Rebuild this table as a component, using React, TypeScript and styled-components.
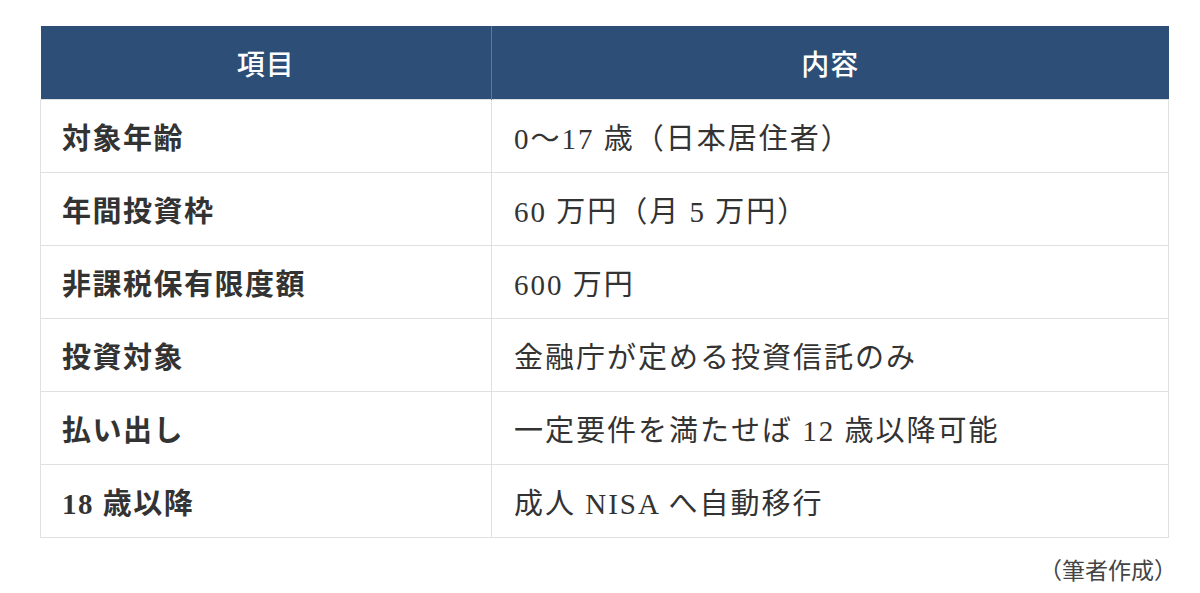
import React from "react";
import styled, { createGlobalStyle } from "styled-components";

const GlobalStyle = createGlobalStyle`
    body {
        margin: 0;
        background: #ffffff;
        font-family: "Liberation Serif", "Noto Sans CJK JP", serif;
    }
`;

const Page = styled.div`
    padding: 26px 31px 0 40px;
`;

const Table = styled.table`
    width: 1129px;
    border-collapse: collapse;
    table-layout: fixed;
`;

const HeadCell = styled.th`
    background-color: #2c4e77;
    color: #ffffff;
    height: 73px;
    padding: 0;
    font-size: 28px;
    font-weight: 500;
    letter-spacing: 1px;
    text-align: center;
    border-left: 1px solid #5a78a0;
    &:first-child {
        border-left: none;
    }
`;

const Row = styled.tr`
    height: 73px;
`;

const Cell = styled.td<{ $bold?: boolean }>`
    border: 1px solid #e0e0e0;
    padding: 0 0 0 ${(p) => (p.$bold ? "21px" : "22px")};
    font-size: 29px;
    font-weight: ${(p) => (p.$bold ? 700 : 400)};
    color: #333333;
    letter-spacing: ${(p) => (p.$bold ? "1.5px" : "2px")};
    white-space: nowrap;
`;

const Caption = styled.div`
    width: 1137px;
    text-align: right;
    margin-top: 14px;
    font-size: 23px;
    color: #444444;
`;

const rows: [string, string][] = [
    ["対象年齢", "0〜17 歳（日本居住者）"],
    ["年間投資枠", "60 万円（月 5 万円）"],
    ["非課税保有限度額", "600 万円"],
    ["投資対象", "金融庁が定める投資信託のみ"],
    ["払い出し", "一定要件を満たせば 12 歳以降可能"],
    ["18 歳以降", "成人 NISA へ自動移行"],
];

const App = () => {
    return (
        <React.Fragment>
            <GlobalStyle />
            <Page>
                <Table>
                    <colgroup>
                        <col style={{ width: 451 }} />
                        <col />
                    </colgroup>
                    <thead>
                        <tr>
                            <HeadCell>項目</HeadCell>
                            <HeadCell>内容</HeadCell>
                        </tr>
                    </thead>
                    <tbody>
                        {rows.map(([item, detail]) => (
                            <Row key={item}>
                                <Cell $bold>{item}</Cell>
                                <Cell>{detail}</Cell>
                            </Row>
                        ))}
                    </tbody>
                </Table>
                <Caption>（筆者作成）</Caption>
            </Page>
        </React.Fragment>
    );
};

export default App;
